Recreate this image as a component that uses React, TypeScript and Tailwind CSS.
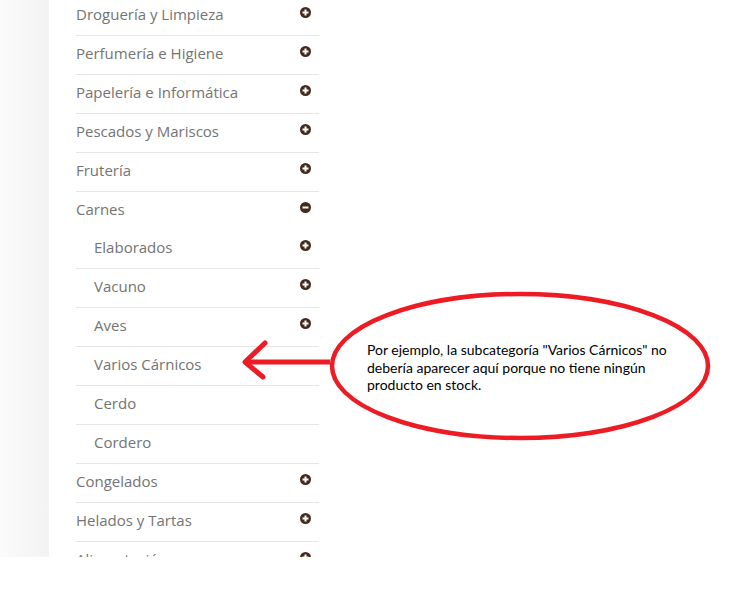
import React from 'react';

type Item = { label: string; icon?: 'plus' | 'minus' | null; sub?: boolean; noBorder?: boolean };

const items: Item[] = [
  { label: 'Droguería y Limpieza', icon: 'plus' },
  { label: 'Perfumería e Higiene', icon: 'plus' },
  { label: 'Papelería e Informática', icon: 'plus' },
  { label: 'Pescados y Mariscos', icon: 'plus' },
  { label: 'Frutería', icon: 'plus' },
  { label: 'Carnes', icon: 'minus', noBorder: true },
  { label: 'Elaborados', icon: 'plus', sub: true },
  { label: 'Vacuno', icon: 'plus', sub: true },
  { label: 'Aves', icon: 'plus', sub: true },
  { label: 'Varios Cárnicos', icon: null, sub: true },
  { label: 'Cerdo', icon: null, sub: true },
  { label: 'Cordero', icon: null, sub: true },
  { label: 'Congelados', icon: 'plus' },
  { label: 'Helados y Tartas', icon: 'plus' },
  { label: 'Alimentación', icon: 'plus' },
];

function ToggleIcon({ kind }: { kind: 'plus' | 'minus' }) {
  return (
    <svg width="11" height="11" viewBox="0 0 11 11" className="block shrink-0">
      <circle cx="5.5" cy="5.5" r="5.5" fill="#45291b" />
      <rect x="2.5" y="4.5" width="6" height="2" fill="#fff" />
      {kind === 'plus' && <rect x="4.5" y="2.5" width="2" height="6" fill="#fff" />}
    </svg>
  );
}

export default function App() {
  return (
    <div className="relative w-[736px] h-[600px] bg-white">
      <div className="flex h-[557px] overflow-hidden">
        <div className="w-[49px] h-full bg-gradient-to-r from-[#fbfbfb] to-[#f3f3f3]" />
        <div className="flex-1 bg-white">
          <ul className="ml-[27px] w-[243px] -mt-[3px]">
            {items.map(item => (
              <li
                key={item.label}
                className={`flex items-center justify-between ${item.noBorder ? 'h-[38px]' : 'h-[39px] border-b border-[#e6e6e6]'} ${item.sub ? 'pl-[18px]' : ''}`}
              >
                <span className="pb-[4px] text-[15px] text-[#747474] font-['Open_Sans',sans-serif] leading-none">
                  {item.label}
                </span>
                {item.icon && (
                  <span className="pb-[8px] mr-[8px]">
                    <ToggleIcon kind={item.icon} />
                  </span>
                )}
              </li>
            ))}
          </ul>
        </div>
      </div>

      {/* red annotation drawn over the page */}
      <svg className="absolute left-0 top-0 pointer-events-none" width="736" height="600">
        <ellipse cx="520" cy="366" rx="188" ry="72" fill="none" stroke="#ed1c24" strokeWidth="4.5" />
        <line x1="330" y1="362" x2="247" y2="362" stroke="#ed1c24" strokeWidth="5" />
        <polyline points="265,343 245,362 263,377" fill="none" stroke="#ed1c24" strokeWidth="5" strokeLinecap="round" strokeLinejoin="round" />
      </svg>

      <p className="absolute left-[367px] top-[341px] w-[330px] text-[14px] leading-[17.5px] text-black font-['Lato',sans-serif]">
        Por ejemplo, la subcategoría "Varios Cárnicos" no debería aparecer aquí porque no tiene ningún producto en stock.
      </p>
    </div>
  );
}
